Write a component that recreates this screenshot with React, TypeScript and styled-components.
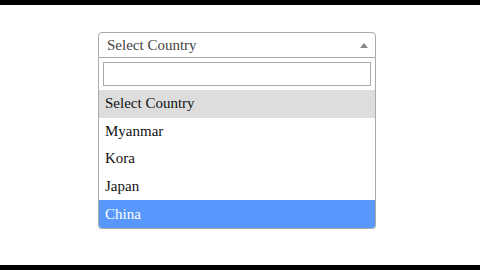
import React from "react";
import styled, { createGlobalStyle } from "styled-components";

const Global = createGlobalStyle`
  html, body { margin: 0; padding: 0; background: #fff; }
  body { font-family: "Liberation Serif", "Times New Roman", serif; }
`;

const Page = styled.div`
  width: 480px;
  height: 270px;
  display: flex;
  flex-direction: column;
  background: #fff;
`;

const Bar = styled.div`
  height: 5px;
  background: #000;
  flex: none;
`;

const Stage = styled.div`
  flex: 1;
  padding: 27px 0 0 98px;
`;

const Select = styled.div`
  width: 278px;
  font-size: 15px;
  color: #222;
`;

const Header = styled.div`
  height: 24px;
  border: 1px solid #aaa;
  border-radius: 4px 4px 0 0;
  display: flex;
  align-items: center;
  justify-content: space-between;
  padding: 0 6px 0 8px;
  color: #444;
`;

const Arrow = styled.span`
  width: 0;
  height: 0;
  border-left: 4px solid transparent;
  border-right: 4px solid transparent;
  border-bottom: 5px solid #888;
  margin-right: 1px;
`;

const Dropdown = styled.div`
  border: 1px solid #aaa;
  border-top: none;
  border-radius: 0 0 4px 4px;
  overflow: hidden;
`;

const SearchWrap = styled.div`
  padding: 4px;
`;

const Search = styled.input`
  display: block;
  box-sizing: border-box;
  width: 100%;
  height: 24px;
  border: 1px solid #aaa;
  margin: 0;
  outline: none;
`;

const Option = styled.div<{ $state?: "hover" | "active" }>`
  height: 27.6px;
  display: flex;
  align-items: center;
  padding: 0 6px;
  color: ${(p) => (p.$state === "active" ? "#fff" : "#111")};
  background: ${(p) =>
    p.$state === "hover" ? "#ddd" : p.$state === "active" ? "#5897fb" : "#fff"};
`;

const options: { label: string; state?: "hover" | "active" }[] = [
  { label: "Select Country", state: "hover" },
  { label: "Myanmar" },
  { label: "Kora" },
  { label: "Japan" },
  { label: "China", state: "active" },
];

export default function App() {
  return (
    <Page>
      <Global />
      <Bar />
      <Stage>
        <Select>
          <Header>
            <span>Select Country</span>
            <Arrow />
          </Header>
          <Dropdown>
            <SearchWrap>
              <Search type="text" />
            </SearchWrap>
            {options.map((o) => (
              <Option key={o.label} $state={o.state}>
                {o.label}
              </Option>
            ))}
          </Dropdown>
        </Select>
      </Stage>
      <Bar />
    </Page>
  );
}
